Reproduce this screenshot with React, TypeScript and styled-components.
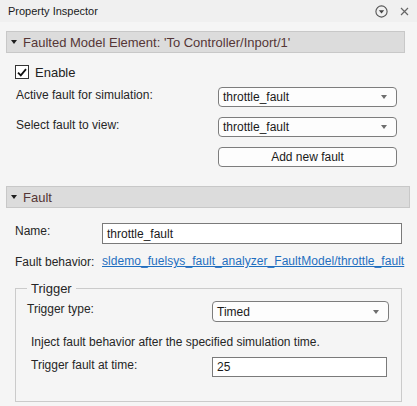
import styled, { createGlobalStyle } from 'styled-components'

const GlobalStyle = createGlobalStyle`
  html, body {
    margin: 0;
    padding: 0;
    background: #f5f5f5;
  }
  body {
    font-family: "Liberation Sans", Arial, sans-serif;
    font-size: 12px;
    color: #262626;
  }
`

const Panel = styled.div`
  width: 417px;
  height: 406px;
  overflow: hidden;
  background: #f5f5f5;
`

const TitleBar = styled.div`
  height: 22px;
  display: flex;
  align-items: center;
  justify-content: space-between;
  padding: 0 8px;
  background: #f0f0f0;
  font-size: 11px;
  color: #1a1a1a;
`

const TitleIcons = styled.div`
  display: flex;
  align-items: center;
  gap: 12px;
  & > svg {
    display: block;
  }
`

const SectionHeader = styled.div<{ $right: number; $top: number }>`
  height: 20px;
  margin: ${p => p.$top}px ${p => p.$right}px 0 6px;
  border: 1px solid #c8c8c8;
  background: #dcdcdc;
  display: flex;
  align-items: center;
  gap: 6px;
  padding-left: 4px;
  font-size: 13px;
  color: #553636;
`

const Caret = styled.span`
  width: 0;
  height: 0;
  border-left: 3px solid transparent;
  border-right: 3px solid transparent;
  border-top: 4px solid #1e1e1e;
`

const SectionBody = styled.div<{ $top: number }>`
  padding: ${p => p.$top}px 0 0 15px;
`

const CheckRow = styled.label`
  display: flex;
  align-items: center;
  gap: 6px;
  height: 14px;
  font-size: 13px;
  color: #222;
`

const CheckBox = styled.span`
  width: 14px;
  height: 14px;
  box-sizing: border-box;
  border: 1px solid #333;
  background: #fff;
  display: flex;
  align-items: center;
  justify-content: center;
`

const FormGrid = styled.div<{ $cols: string; $top: number; $gap?: number }>`
  display: grid;
  grid-template-columns: ${p => p.$cols};
  row-gap: ${p => p.$gap ?? 10}px;
  margin-top: ${p => p.$top}px;
  align-items: start;
`

const Label = styled.span<{ $indent?: number }>`
  line-height: 14px;
  padding: 1px 0 0 ${p => p.$indent ?? 1}px;
  white-space: nowrap;
  color: #262626;
`

const Select = styled.div<{ $h?: number }>`
  box-sizing: border-box;
  height: ${p => p.$h ?? 20}px;
  border: 1px solid #7d7d7d;
  border-radius: 4px;
  background: #fdfdfd;
  display: flex;
  align-items: center;
  justify-content: space-between;
  padding: 0 9px 0 4px;
  color: #1a1a1a;
`

const SelectArrow = styled.span`
  width: 0;
  height: 0;
  border-left: 3.5px solid transparent;
  border-right: 3.5px solid transparent;
  border-top: 4px solid #6e6e6e;
`

const Button = styled.button`
  box-sizing: border-box;
  height: 20px;
  border: 1px solid #7d7d7d;
  border-radius: 4px;
  background: #fdfdfd;
  font: inherit;
  color: #1a1a1a;
  padding: 0;
`

const TextField = styled.div<{ $h?: number }>`
  box-sizing: border-box;
  height: ${p => p.$h ?? 20}px;
  border: 1px solid #7a7a7a;
  background: #fff;
  display: flex;
  align-items: center;
  padding-left: 4px;
  color: #1a1a1a;
`

const LinkRow = styled.div`
  display: grid;
  grid-template-columns: 87px auto;
  margin-top: 10px;
  line-height: 14px;
`

const Link = styled.a`
  color: #1f6fc0;
  letter-spacing: 0.05px;
  text-decoration: underline;
  white-space: nowrap;
`

const Group = styled.fieldset`
  margin: 12px 0 0 0;
  width: 387px;
  box-sizing: border-box;
  border: 1px solid #cbcbcb;
  padding: 5px 0 24px 11px;
  & > legend {
    padding: 0 4px;
    font-size: 13px;
    line-height: 15px;
    color: #262626;
  }
`

const Description = styled.div`
  margin-top: 13px;
  padding-left: 4px;
  line-height: 14px;
  color: #262626;
`

function Dropdown({ value, h }: { value: string; h?: number }) {
  return (
    <Select $h={h}>
      <span>{value}</span>
      <SelectArrow />
    </Select>
  )
}

export default function App() {
  return (
    <>
      <GlobalStyle />
      <Panel>
        <TitleBar>
          <span>Property Inspector</span>
          <TitleIcons>
            <svg width="13" height="13" viewBox="0 0 13 13">
              <circle cx="6.5" cy="6.5" r="5.6" fill="none" stroke="#555" strokeWidth="1.1" />
              <path d="M3.8 5.2 L9.2 5.2 L6.5 8.6 Z" fill="#444" />
            </svg>
            <svg width="9" height="9" viewBox="0 0 9 9">
              <path d="M1 1 L8 8 M8 1 L1 8" stroke="#666" strokeWidth="1.2" />
            </svg>
          </TitleIcons>
        </TitleBar>

        <SectionHeader $top={9} $right={12}>
          <Caret />
          <span>Faulted Model Element: 'To Controller/Inport/1'</span>
        </SectionHeader>
        <SectionBody $top={12}>
          <CheckRow>
            <CheckBox>
              <svg width="10" height="9" viewBox="0 0 10 9">
                <path d="M1 4.6 L3.8 7.4 L9 1.2" fill="none" stroke="#111" strokeWidth="1.8" />
              </svg>
            </CheckBox>
            Enable
          </CheckRow>
          <FormGrid $cols="203px 179px" $top={8}>
            <Label>Active fault for simulation:</Label>
            <Dropdown value="throttle_fault" />
            <Label>Select fault to view:</Label>
            <Dropdown value="throttle_fault" />
            <span />
            <Button>Add new fault</Button>
          </FormGrid>
        </SectionBody>

        <SectionHeader $top={19} $right={7}>
          <Caret />
          <span>Fault</span>
        </SectionHeader>
        <SectionBody $top={15}>
          <FormGrid $cols="87px 300px" $top={0}>
            <Label $indent={0}>Name:</Label>
            <TextField $h={21}>throttle_fault</TextField>
          </FormGrid>
          <LinkRow>
            <Label $indent={0}>Fault behavior:</Label>
            <Link href="#">sldemo_fuelsys_fault_analyzer_FaultModel/throttle_fault</Link>
          </LinkRow>
          <Group>
            <legend>Trigger</legend>
            <FormGrid $cols="185px 177px" $top={0}>
              <Label $indent={0}>Trigger type:</Label>
              <Dropdown value="Timed" h={21} />
            </FormGrid>
            <Description>Inject fault behavior after the specified simulation time.</Description>
            <FormGrid $cols="185px 175px" $top={8}>
              <Label $indent={4}>Trigger fault at time:</Label>
              <TextField>25</TextField>
            </FormGrid>
          </Group>
        </SectionBody>
      </Panel>
    </>
  )
}
